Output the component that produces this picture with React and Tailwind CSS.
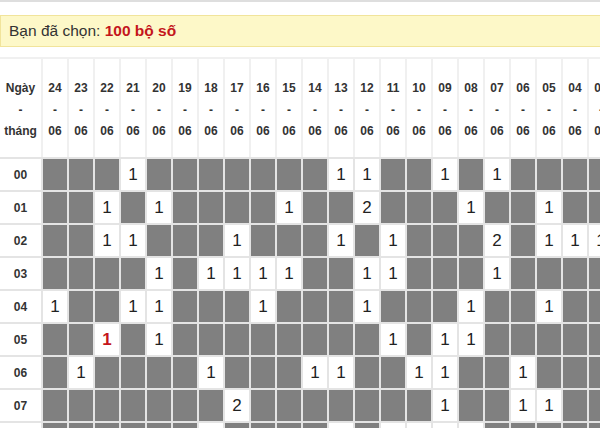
import React from "react";

// các ngày hiển thị (24-06 → 03-06)
const days = ["24", "23", "22", "21", "20", "19", "18", "17", "16", "15", "14", "13", "12", "11", "10", "09", "08", "07", "06", "05", "04", "03"];

// mỗi dòng: "." = ô xám, chữ số = ô trắng có số, "r" = số 1 màu đỏ
const rows = [
  ["00", "...1.......11..1.1...."],
  ["01", "..1.1....1..2...1..1.."],
  ["02", "..11...1...1.1...2.111"],
  ["03", "....1.1111..11...1...."],
  ["04", "1..11...1...1...1..1.."],
  ["05", "..r.1........1.11....."],
  ["06", ".1....1...11..11..1..."],
  ["07", ".......2.......1..11.."],
  ["08", "......1....1.1111....."],
];

const Cell = ({ v }) => {
  if (v === ".") return <div className="h-[31px] bg-[#808080]" />;
  if (v === "r")
    return (
      <div className="h-[31px] bg-white flex items-center justify-center text-[17px] font-bold text-[#c4161c]">1</div>
    );
  return (
    <div className="h-[31px] bg-white flex items-center justify-center text-[17px] text-[#222]">{v}</div>
  );
};

export default function App() {
  return (
    <div
      className="w-[600px] h-[428px] overflow-hidden bg-white border-t-2 border-[#dedede]"
      style={{ fontFamily: '"Liberation Sans", Arial, sans-serif' }}
    >
      {/* Thông báo */}
      <div className="mt-[13px] h-[32px] w-[620px] bg-[#fdf8c8] border border-[#f1e49b] flex items-center pl-[8px] text-[15.5px] text-[#333]">
        Bạn đã chọn:&nbsp;<span className="font-bold text-[#c4161c]">100 bộ số</span>
      </div>

      {/* Tiêu đề bảng */}
      <div className="mt-[10px] w-[620px] bg-[#f0f0f0] pt-[2px] grid grid-cols-[41px_repeat(22,24px)] gap-x-[2px]">
        <div className="h-[98px] bg-white flex flex-col items-center justify-center pt-[5px] text-[12px] font-bold text-[#333] leading-[21.5px]">
          <span>Ngày</span>
          <span>-</span>
          <span>tháng</span>
        </div>
        {days.map((d) => (
          <div
            key={d}
            className="h-[98px] bg-white flex flex-col items-center justify-center pt-[5px] text-[12px] font-bold text-[#333] leading-[21.5px]"
          >
            <span>{d}</span>
            <span>-</span>
            <span>06</span>
          </div>
        ))}
      </div>

      {/* Dữ liệu */}
      <div className="w-[620px] bg-[#e4e4e4] pt-[2px] grid grid-cols-[41px_repeat(22,24px)] gap-[2px]">
        {rows.map(([label, cells]) => (
          <React.Fragment key={label}>
            <div className="h-[31px] bg-white flex items-center justify-center text-[12px] font-bold text-[#333]">
              {label}
            </div>
            {cells.split("").map((v, i) => (
              <Cell key={i} v={v} />
            ))}
          </React.Fragment>
        ))}
      </div>
    </div>
  );
}
